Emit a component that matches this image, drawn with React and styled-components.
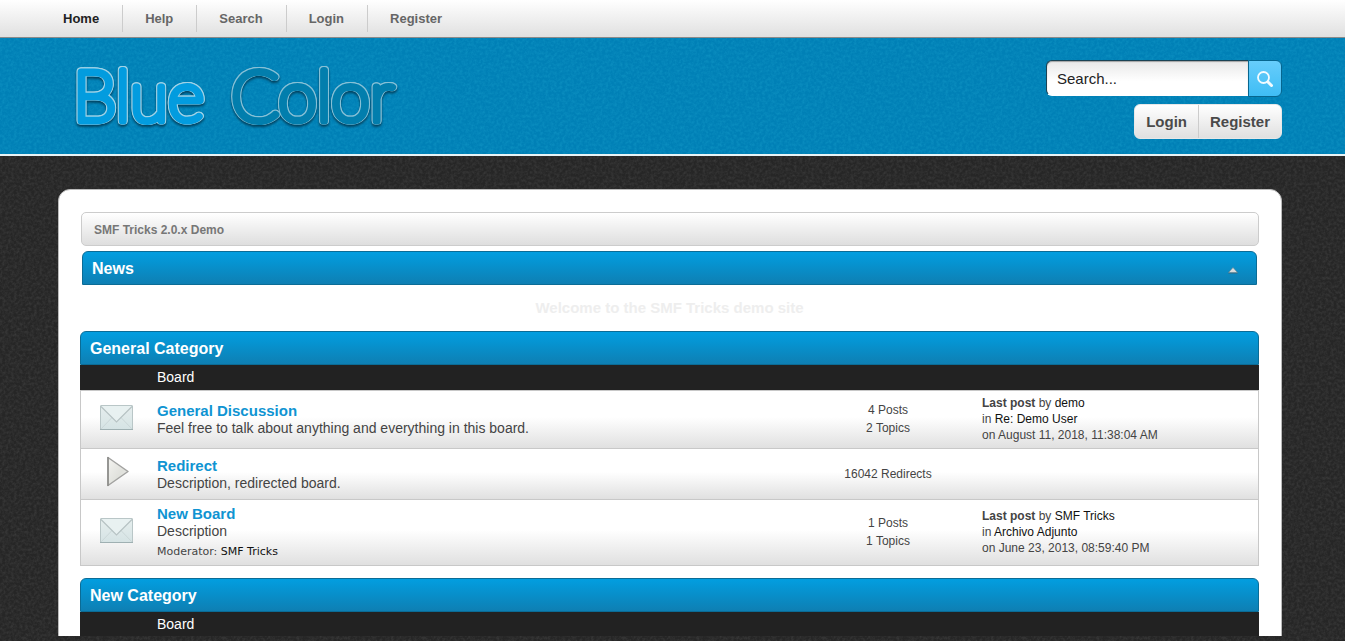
import React, { useState } from 'react'
import styled, { createGlobalStyle } from 'styled-components'

const menu = ['Home', 'Help', 'Search', 'Login', 'Register'];

const categories = [
  {
    id: 'general',
    name: 'General Category',
    boards: [
      {
        name: 'General Discussion',
        description: 'Feel free to talk about anything and everything in this board.',
        icon: 'mail',
        stats: ['4 Posts', '2 Topics'],
        last: { by: 'demo', topic: 'Re: Demo User', date: 'August 11, 2018, 11:38:04 AM' },
      },
      {
        name: 'Redirect',
        description: 'Description, redirected board.',
        icon: 'redirect',
        stats: ['16042 Redirects'],
      },
      {
        name: 'New Board',
        description: 'Description',
        moderator: 'SMF Tricks',
        icon: 'mail',
        stats: ['1 Posts', '1 Topics'],
        last: { by: 'SMF Tricks', topic: 'Archivo Adjunto', date: 'June 23, 2013, 08:59:40 PM' },
      },
    ],
  },
  { id: 'new', name: 'New Category', boards: [] },
];

// grain of one tint (r g b from 0 to 1), its alpha taken from the noise
const noise = (r, g, b, strength) => {
  const matrix = `0 0 0 0 ${r} 0 0 0 0 ${g} 0 0 0 0 ${b} ${strength} 0 0 0 ${-strength * 0.35}`;
  const svg = `<svg xmlns='http://www.w3.org/2000/svg' width='200' height='200'><filter id='n' x='0' y='0' width='100%' height='100%'><feTurbulence type='fractalNoise' baseFrequency='0.35' numOctaves='3' stitchTiles='stitch'/><feColorMatrix values='${matrix}'/></filter><rect width='200' height='200' filter='url(#n)'/></svg>`;
  return `url("data:image/svg+xml,${encodeURIComponent(svg).replace(/'/g, '%27').replace(/\(/g, '%28').replace(/\)/g, '%29')}")`;
};

const Logo = () => (
  <LogoSvg width="350" height="94" viewBox="0 0 350 94" role="img" aria-label="Blue Color">
    <LogoText x="3" y="71" $color="#029cdf" $edge="#a0d2e6">Blue</LogoText>
    <LogoText x="161" y="71" $color="#027ead" $edge="#86c0d6">Color</LogoText>
  </LogoSvg>
);

const SearchIcon = () => (
  <svg width="18" height="18" viewBox="0 0 18 18" fill="none" stroke="#f2fbff" aria-hidden="true">
    <circle cx="7.500" cy="7.500" r="5.500" strokeWidth="1.800" />
    <path d="M12 12l3.500 3.500" strokeWidth="3" strokeLinecap="round" />
  </svg>
);

const MailIcon = () => (
  <svg width="40" height="40" viewBox="0 0 40 40" fill="none" aria-hidden="true">
    <defs>
      <linearGradient id="paper" x1="0" y1="0" x2="0" y2="1">
        <stop offset="0" stopColor="#e6eeee" />
        <stop offset="1" stopColor="#d5e3e4" />
      </linearGradient>
    </defs>
    <rect x="3.500" y="5.500" width="32" height="24" rx="0.500" fill="url(#paper)" stroke="#b9c6c7" />
    <path d="M4 29l11.500-12M35 29L23.500 17" stroke="#cbd7d8" />
    <path d="M4 6h31L19.500 21.500z" fill="#e8f1f1" />
    <path d="M4 6.500l15.500 15.500L35 6.500" stroke="#b7c3c4" strokeWidth="1.200" />
    <path d="M3 29.500h33" stroke="#9fb0b2" />
  </svg>
);

const RedirectIcon = () => (
  <svg width="40" height="40" viewBox="0 0 40 40" aria-hidden="true">
    <defs>
      <linearGradient id="arrow" x1="0" y1="0" x2="1" y2="1">
        <stop offset="0" stopColor="#f4f4f1" />
        <stop offset="0.6" stopColor="#e0e1dc" />
        <stop offset="1" stopColor="#eeeeec" />
      </linearGradient>
    </defs>
    <path d="M11 3.500L31 17.500L11 31.500z" fill="url(#arrow)" stroke="#a2a2a0" strokeWidth="1.500" strokeLinejoin="round" />
    <path d="M11 3v29" stroke="#8b8b89" strokeWidth="1.500" />
  </svg>
);

const BoardRow = ({ board }) => (
  <Row>
    <IconCell>{board.icon === 'mail' ? <MailIcon /> : <RedirectIcon />}</IconCell>
    <InfoCell>
      <BoardLink href="#board">{board.name}</BoardLink>
      <Description>{board.description}</Description>
      {board.moderator && (
        <Moderator>Moderator: <DarkLink href="#profile">{board.moderator}</DarkLink></Moderator>
      )}
    </InfoCell>
    <StatsCell>
      {board.stats.map((stat) => <div key={stat}>{stat}</div>)}
    </StatsCell>
    <LastCell>
      {board.last && (
        <>
          <div><strong>Last post</strong> by <DarkLink href="#profile">{board.last.by}</DarkLink></div>
          <div>in <DarkLink href="#topic">{board.last.topic}</DarkLink></div>
          <div>on {board.last.date}</div>
        </>
      )}
    </LastCell>
  </Row>
);

const App = () => {
  const [query, setQuery] = useState('Search...');
  const [newsOpen, setNewsOpen] = useState(true);

  return (
    <>
      <GlobalStyle />
      <Page>
        <Nav>
          {menu.map((item) => (
            <NavLink key={item} href="#menu" $active={item === 'Home'}>{item}</NavLink>
          ))}
        </Nav>
        <Header>
          <Logo />
          <HeaderTools>
            <SearchForm onSubmit={(e) => e.preventDefault()}>
              <SearchInput
                type="text"
                aria-label="Search"
                value={query}
                onChange={(e) => setQuery(e.target.value)}
              />
              <SearchButton type="submit" aria-label="Submit search"><SearchIcon /></SearchButton>
            </SearchForm>
            <UserLinks>
              <UserLink href="#login">Login</UserLink>
              <UserLink href="#register">Register</UserLink>
            </UserLinks>
          </HeaderTools>
        </Header>
        <Main>
          <Panel>
            <Breadcrumb><CrumbLink href="#home">SMF Tricks 2.0.x Demo</CrumbLink></Breadcrumb>
            <NewsBar>
              News
              <CollapseButton type="button" aria-label="Toggle news" onClick={() => setNewsOpen(!newsOpen)}>
                <svg width="10" height="7" viewBox="0 0 10 7" aria-hidden="true">
                  <path d="M0.500 6h9" stroke="#3f6678" />
                  <path d="M5 0.500L9.500 5.500h-9z" fill="#d9dcdd" stroke="#5e7f8d" strokeWidth="0.600" />
                </svg>
              </CollapseButton>
            </NewsBar>
            {newsOpen && <NewsText>Welcome to the SMF Tricks demo site</NewsText>}
            {categories.map((category) => (
              <Category key={category.id}>
                <TitleBar>{category.name}</TitleBar>
                <BoardTable>
                  <thead>
                    <tr>
                      <HeadCell $width="73px" />
                      <HeadCell scope="col">Board</HeadCell>
                      <HeadCell $width="180px" />
                      <HeadCell $width="281px" />
                    </tr>
                  </thead>
                  <tbody>
                    {category.boards.map((board) => <BoardRow key={board.name} board={board} />)}
                  </tbody>
                </BoardTable>
              </Category>
            ))}
          </Panel>
        </Main>
      </Page>
    </>
  );
};

const GlobalStyle = createGlobalStyle`
  * {
    box-sizing: border-box;
  }
  body {
    margin: 0;
    background: ${noise(0.24, 0.24, 0.24, 0.35)} #262626;
    font-family: 'Liberation Sans', Arial, sans-serif;
    color: #444;
  }
  a {
    text-decoration: none;
  }
`;

const Page = styled.div`
  height: calc(100vh - 5px);
  overflow: hidden;
`;

const Nav = styled.nav`
  display: flex;
  align-items: center;
  height: 38px;
  padding: 0 41px;
  background: linear-gradient(#fff, #e0e0e0);
  border-bottom: 1px solid #8a8a8a;
`;

const NavLink = styled.a`
  padding: 0 23px 0 22px;
  font-size: 13px;
  font-weight: bold;
  line-height: 27px;
  color: ${(props) => (props.$active ? '#222' : '#666')};
  border-right: 1px solid #ccc;
  &:last-child {
    border-right: none;
  }
`;

const Header = styled.header`
  display: flex;
  justify-content: space-between;
  align-items: flex-start;
  height: 118px;
  padding: 12px 63px 0 70px;
  background: ${noise(0.04, 0.6, 0.82, 0.35)} #0080b6;
  border-bottom: 2px solid #e8f3f5;
`;

const LogoSvg = styled.svg`
  overflow: visible;
  filter: drop-shadow(0 2px 1px rgba(0, 40, 60, 0.7));
`;

const LogoText = styled.text`
  font-family: Lato, sans-serif;
  font-weight: 100;
  font-size: 70px;
  fill: ${(props) => props.$color};
  stroke: ${(props) => props.$color};
  stroke-width: 7px;
  stroke-linejoin: round;
  stroke-linecap: round;
  filter: drop-shadow(1px 0 0 ${(props) => props.$edge}) drop-shadow(-1px 0 0 ${(props) => props.$edge})
    drop-shadow(0 -1px 0 ${(props) => props.$edge});
`;

const HeaderTools = styled.div`
  display: flex;
  flex-direction: column;
  align-items: flex-end;
  gap: 7px;
  padding-top: 10px;
`;

const SearchForm = styled.form`
  display: flex;
`;

const SearchInput = styled.input`
  width: 202px;
  height: 36px;
  padding: 0 10px;
  font-family: inherit;
  font-size: 15px;
  color: #222;
  background: linear-gradient(#e8e8e8, #fff 60%);
  border: 1px solid #1b4354;
  border-right: none;
  border-bottom-color: #fff;
  border-radius: 6px 0 0 6px;
  box-shadow: inset 0 1px 1px rgba(0, 0, 0, 0.3);
  outline: none;
`;

const SearchButton = styled.button`
  display: flex;
  align-items: center;
  justify-content: center;
  width: 34px;
  height: 37px;
  padding: 0;
  cursor: pointer;
  background: linear-gradient(#67cdfb, #3fbdf5);
  border: 1px solid #07668f;
  border-radius: 0 6px 6px 0;
`;

const UserLinks = styled.div`
  display: flex;
  height: 35px;
  background: linear-gradient(#fff, #e0e0e0);
  border-radius: 6px;
  border: 1px solid #e8e8e8;
`;

const UserLink = styled.a`
  padding: 0 11px;
  font-size: 15px;
  font-weight: bold;
  line-height: 34px;
  color: #4a4a4a;
  & + & {
    border-left: 1px solid #ccc;
  }
`;

const Main = styled.main`
  padding: 33px 63px 40px 58px;
`;

const Panel = styled.div`
  padding: 22px 22px 24px 21px;
  background: #fff;
  border: 1px solid #bbb;
  border-radius: 12px;
`;

const Breadcrumb = styled.nav`
  height: 34px;
  margin: 0 0 5px 1px;
  padding: 0 12px;
  line-height: 34px;
  background: linear-gradient(#fff, #dedede);
  border: 1px solid #ccc;
  border-radius: 5px;
`;

const CrumbLink = styled.a`
  display: block;
  font-size: 12px;
  font-weight: bold;
  color: #777;
`;

const TitleBar = styled.h3`
  display: flex;
  align-items: center;
  justify-content: space-between;
  height: 34px;
  margin: 0;
  padding: 2px 9px 0;
  font-size: 16px;
  color: #fff;
  background: linear-gradient(#029ee0, #0e7fb3);
  border: 1px solid #0b6c96;
  border-radius: 6px 6px 0 0;
`;

const NewsBar = styled(TitleBar)`
  margin: 0 2px;
`;

const CollapseButton = styled.button`
  display: flex;
  padding: 3px 9px 0;
  cursor: pointer;
  background: none;
  border: none;
`;

const NewsText = styled.p`
  margin: 0;
  font-size: 15px;
  font-weight: bold;
  line-height: 46px;
  text-align: center;
  color: #eee;
`;

const Category = styled.section`
  margin-bottom: 12px;
`;

const BoardTable = styled.table`
  width: 100%;
  table-layout: fixed;
  border-collapse: separate;
  border-spacing: 0;
`;

const HeadCell = styled.th`
  width: ${(props) => props.$width || 'auto'};
  height: 26px;
  padding: 0 4px 2px;
  font-size: 14px;
  font-weight: normal;
  text-align: left;
  color: #fff;
  background: #222;
  border-bottom: 1px solid #c8c8c8;
`;

const Row = styled.tr`
  background: linear-gradient(#fff 45%, #dfdfdf);
`;

const Cell = styled.td`
  padding: 4px 4px 5px;
  border-bottom: 1px solid #c8c8c8;
`;

const IconCell = styled(Cell)`
  padding: 5px 0;
  text-align: center;
  border-left: 1px solid #c8c8c8;
  svg {
    display: block;
    margin: 0 auto;
  }
`;

const InfoCell = styled(Cell)`
  padding: 5px 4px;
`;

const BoardLink = styled.a`
  display: block;
  font-size: 15px;
  font-weight: bold;
  line-height: 18px;
  color: #0f94d2;
`;

const Description = styled.div`
  font-size: 14px;
  line-height: 17px;
`;

const Moderator = styled.div`
  margin-top: 4px;
  font-family: 'DejaVu Sans', Verdana, sans-serif;
  font-size: 11px;
  line-height: 16px;
`;

const DarkLink = styled.a`
  color: #111;
`;

const StatsCell = styled(Cell)`
  font-size: 12px;
  line-height: 18px;
  text-align: center;
`;

const LastCell = styled(Cell)`
  font-size: 12px;
  line-height: 16px;
  border-right: 1px solid #c8c8c8;
`;

export default App;
